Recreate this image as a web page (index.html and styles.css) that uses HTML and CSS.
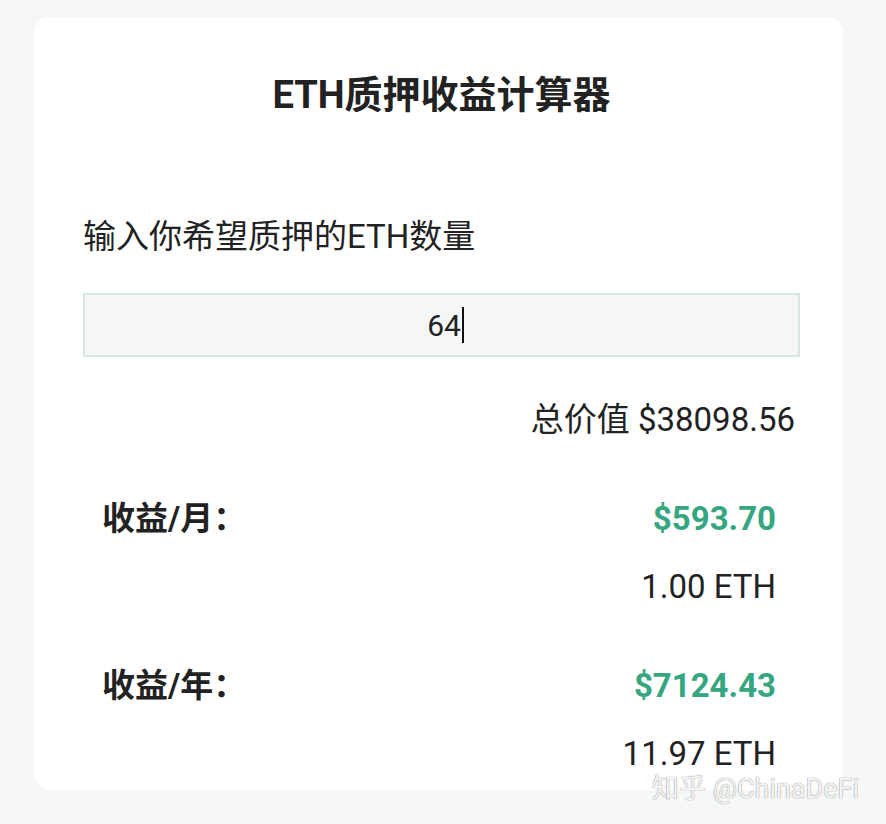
FILE: index.html
```html
<!DOCTYPE html>
<html>
<head>
  <meta charset="utf-8">
  <title>ETH质押收益计算器</title>
  <link rel="stylesheet" href="styles.css">
</head>
<body>
  <div class="calc">
    <h1 class="title">ETH质押收益计算器</h1>
    <p class="label">输入你希望质押的ETH数量</p>
    <div class="inputbox"><span>64</span><i class="caret"></i></div>
    <p class="total">总价值 $38098.56</p>

    <div class="row">
      <span class="name">收益/月：</span>
      <span class="usd">$593.70</span>
    </div>
    <p class="eth">1.00 ETH</p>

    <div class="row">
      <span class="name">收益/年：</span>
      <span class="usd">$7124.43</span>
    </div>
    <p class="eth">11.97 ETH</p>
  </div>
  <p class="mark">知乎 @ChinaDeFi</p>
</body>
</html>
```

FILE: styles.css
```css
body {
  margin: 0;
  height: 824px;
  background-color: #f6f8f7;
  font-family: Roboto, "Noto Sans CJK SC", sans-serif;
  color: #222;
  position: relative;
  overflow: hidden;
}

.calc {
  margin: 17px 43px 0 34px;
  height: 773px;
  box-sizing: border-box;
  padding: 0 43px 0 49px;
  background-color: white;
  border-radius: 16px;
  overflow: hidden;
}

.title {
  margin: 0;
  padding-top: 54px;
  font-size: 38px;
  line-height: 48px;
  text-align: center;
  font-weight: 700;
}

.label {
  margin: 96px 0 0;
  font-size: 33px;
  line-height: 44px;
}

.inputbox {
  margin-top: 34px;
  height: 64px;
  box-sizing: border-box;
  border: 2px solid #d9e6de;
  background-color: #f5f7f6;
  display: flex;
  align-items: center;
  justify-content: center;
  font-size: 30px;
  padding-left: 8px;
}

.caret {
  display: inline-block;
  width: 2px;
  height: 36px;
  background-color: #111;
  margin-left: 1px;
}

.total {
  margin: 41px 5px 0 0;
  font-size: 33px;
  line-height: 44px;
  text-align: right;
}

.row {
  display: flex;
  justify-content: space-between;
  align-items: center;
  margin: 55px 24px 0 19px;
  font-size: 33px;
  line-height: 44px;
  font-weight: 700;
}

.usd {
  color: #35a67f;
}

.eth {
  margin: 24px 24px 0 0;
  font-size: 33px;
  line-height: 44px;
  text-align: right;
}

.mark {
  position: absolute;
  left: 652px;
  top: 770px;
  margin: 0;
  font-size: 27px;
  line-height: 38px;
  color: #f4f4f4;
  text-shadow: 0 0 1px #999, 0 0 1px #999;
}
```
